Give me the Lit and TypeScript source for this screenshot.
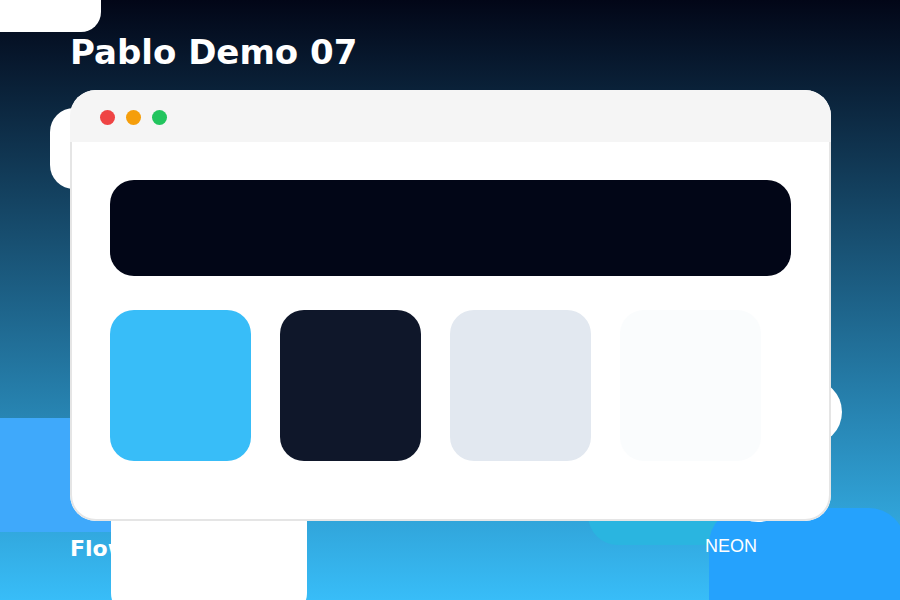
import { LitElement, html, css } from "lit";
import { customElement } from "lit/decorators.js";

@customElement("app-root")
export class AppRoot extends LitElement {
  static styles = css`
    :host { display: block; }
    .stage {
      position: relative; width: 900px; height: 600px; overflow: hidden;
      background: linear-gradient(180deg, #020617 0%, #38bdf8 100%);
      font-family: "DejaVu Sans", sans-serif; color: #fff;
    }
    .blob { position: absolute; }
    .b1 { left: -60px; top: -40px; width: 161px; height: 72px; background: #fff; border-radius: 20px; }
    .b2 { left: 50px; top: 108px; width: 100px; height: 81px; background: #fff; border-radius: 24px; }
    .b3 { left: -40px; top: 418px; width: 200px; height: 114px; background: #3fa9fb; }
    .b4 { left: 111px; top: 480px; width: 196px; height: 137px; background: #fff; border-radius: 24px; }
    .b5 { left: 776px; top: 379px; width: 66px; height: 66px; background: #fff; border-radius: 50%; }
    .b6 { left: 725px; top: 456px; width: 66px; height: 66px; background: #fff; border-radius: 50%; }
    .b7 { left: 588px; top: 470px; width: 160px; height: 75px; background: #2ab5e0; border-radius: 30px; }
    .b8 { left: 709px; top: 508px; width: 196px; height: 130px; background: #25a2fd; border-radius: 36px; }
    .title { position: absolute; left: 70px; top: 31px; font-size: 34px; font-weight: 700; line-height: 42px; white-space: nowrap; }
    .foot { position: absolute; left: 70px; top: 536px; font-size: 22px; font-weight: 700; line-height: 26px; }
    .neon { position: absolute; left: 705px; top: 536px; font: 18px/20px "Liberation Sans", sans-serif; }
    .card {
      position: absolute; left: 70px; top: 90px; width: 761px; height: 431px;
      background: #fff; border-radius: 26px; overflow: hidden;
      display: flex; flex-direction: column;
    }
    .bar { height: 52px; box-sizing: border-box; padding: 2px 0 0 30px; background: #f5f5f5; display: flex; align-items: center; gap: 11px; flex: none; }
    .dot { width: 15px; height: 15px; border-radius: 50%; }
    .body {
      flex: 1; box-sizing: border-box; padding: 38px 38px 0;
      border: solid #e5e5e5; border-width: 0 2px 2px; border-radius: 0 0 26px 26px;
      display: flex; flex-direction: column; gap: 34px;
    }
    .hero { height: 96px; background: #020617; border-radius: 24px; }
    .tiles { display: flex; gap: 29px; }
    .tile { width: 141px; height: 151px; border-radius: 24px; }
    .sky { background: #38bdf8; }
    .ink { background: #0f172a; }
    .mist { background: #e2e8f0; }
    .snow { background: #fafcfd; }
    .red { background: #ef4444; }
    .amber { background: #f59e0b; }
    .green { background: #22c55e; }
  `;
  render() {
    return html`<div class="stage">
      <div class="blob b3"></div><div class="blob b7"></div>
      <div class="blob b1"></div><div class="blob b2"></div>
      <div class="title">Pablo Demo 07</div>
      <div class="foot">Flow</div>
      <div class="blob b8"></div>
      <div class="neon">NEON</div>
      <div class="blob b4"></div><div class="blob b5"></div><div class="blob b6"></div>
      <div class="card">
        <div class="bar">
          <span class="dot red"></span>
          <span class="dot amber"></span>
          <span class="dot green"></span>
        </div>
        <div class="body">
          <div class="hero"></div>
          <div class="tiles">
            <div class="tile sky"></div>
            <div class="tile ink"></div>
            <div class="tile mist"></div>
            <div class="tile snow"></div>
          </div>
        </div>
      </div>
    </div>`;
  }
}
